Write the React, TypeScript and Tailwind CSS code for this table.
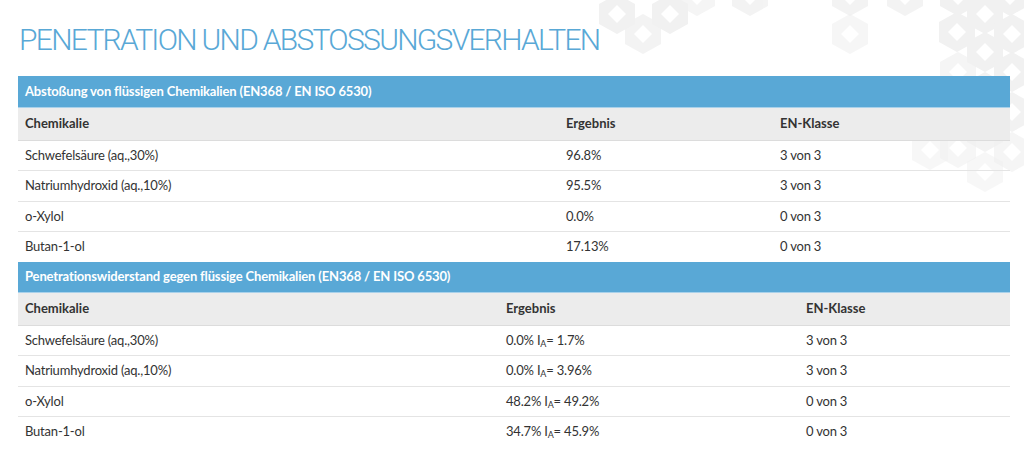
import React from "react";

type Row = { name: string; result: React.ReactNode; klasse: string };

const hexes: [number, number, number][] = [
  [617, 14, 1], [670, 14, 1], [643, 34, 0.8], [697, -4, 0.7], [750, -4, 0.8],
  [850, -4, 0.8], [850, 34, 0.6], [905, -4, 0.8], [958, -4, 1], [1010, -4, 1],
  [957, 32, 1], [985, 14, 1], [1012, 34, 1], [985, 52, 1], [1012, 72, 1],
  [985, 92, 0.9], [958, 72, 0.7], [1012, 112, 0.9], [985, 132, 0.8],
  [958, 148, 0.6], [930, 150, 0.5], [1012, 152, 0.7], [985, 172, 0.5],
];

function Pattern() {
  return (
    <svg
      className="absolute left-0 top-0 pointer-events-none"
      width={1024}
      height={200}
      viewBox="0 0 1024 200"
    >
      {hexes.map(([x, y, o], i) => (
        <g key={i} opacity={o}>
          <polygon
            points={`${x},${y - 20} ${x + 18},${y - 10} ${x + 18},${y + 10} ${x},${y + 20} ${x - 18},${y + 10} ${x - 18},${y - 10}`}
            fill="#f1f1f1"
          />
          <polygon
            points={`${x},${y - 9} ${x + 9},${y} ${x},${y + 9} ${x - 9},${y}`}
            fill="#ffffff"
          />
        </g>
      ))}
    </svg>
  );
}

function Ia({ a, b }: { a: string; b: string }) {
  return (
    <>
      {a} I<sub className="text-[9px] relative top-[2px]">A</sub>= {b}
    </>
  );
}

function DataTable({
  title,
  rows,
  cols,
  barH,
}: {
  title: string;
  rows: Row[];
  cols: [string, string, string];
  barH: string;
}) {
  return (
    <table className="w-full border-collapse text-[13px] tracking-[-0.2px] text-[#333]">
      <colgroup>
        <col className={cols[0]} />
        <col className={cols[1]} />
        <col className={cols[2]} />
      </colgroup>
      <thead>
        <tr className={`bg-[#59a8d6] ${barH}`}>
          <th
            colSpan={3}
            className="text-left text-white font-bold text-[13px] tracking-[-0.15px] px-[7px] border-b border-[#a9d1ea]"
          >
            {title}
          </th>
        </tr>
        <tr className="bg-[#ececec] h-[33px] border-b border-[#dcdcdc]">
          <th className="text-left font-bold px-[7px] tracking-normal">Chemikalie</th>
          <th className="text-left font-bold px-[7px] tracking-normal">Ergebnis</th>
          <th className="text-left font-bold px-[7px] tracking-normal">EN-Klasse</th>
        </tr>
      </thead>
      <tbody>
        {rows.map((r, i) => (
          <tr
            key={i}
            className={`h-[30.5px] ${i < rows.length - 1 ? "border-b border-[#e4e4e4]" : ""}`}
          >
            <td className="px-[7px]">{r.name}</td>
            <td className="px-[7px]">{r.result}</td>
            <td className="px-[7px]">{r.klasse}</td>
          </tr>
        ))}
      </tbody>
    </table>
  );
}

export default function App() {
  const repel: Row[] = [
    { name: "Schwefelsäure (aq.,30%)", result: "96.8%", klasse: "3 von 3" },
    { name: "Natriumhydroxid (aq.,10%)", result: "95.5%", klasse: "3 von 3" },
    { name: "o-Xylol", result: "0.0%", klasse: "0 von 3" },
    { name: "Butan-1-ol", result: "17.13%", klasse: "0 von 3" },
  ];
  const penetration: Row[] = [
    { name: "Schwefelsäure (aq.,30%)", result: <Ia a="0.0%" b="1.7%" />, klasse: "3 von 3" },
    { name: "Natriumhydroxid (aq.,10%)", result: <Ia a="0.0%" b="3.96%" />, klasse: "3 von 3" },
    { name: "o-Xylol", result: <Ia a="48.2%" b="49.2%" />, klasse: "0 von 3" },
    { name: "Butan-1-ol", result: <Ia a="34.7%" b="45.9%" />, klasse: "0 von 3" },
  ];

  return (
    <div className="relative w-[1024px] h-[460px] bg-white overflow-hidden font-['Lato',sans-serif]">
      <Pattern />
      <div className="relative pl-[18px] pr-[14px] pt-[22px]">
        <h1 className="font-['Roboto',sans-serif] text-[30px] font-light leading-[36px] tracking-[-1.7px] text-[#59a8d6] ml-[1px]">
          PENETRATION UND ABSTOSSUNGSVERHALTEN
        </h1>
        <div className="mt-[18px]">
          <DataTable
            title="Abstoßung von flüssigen Chemikalien (EN368 / EN ISO 6530)"
            rows={repel}
            cols={["w-[541px]", "w-[214px]", "w-[237px]"]}
            barH="h-[31px]"
          />
          <DataTable
            title="Penetrationswiderstand gegen flüssige Chemikalien (EN368 / EN ISO 6530)"
            rows={penetration}
            cols={["w-[481px]", "w-[300px]", "w-[211px]"]}
            barH="h-[30px]"
          />
        </div>
      </div>
    </div>
  );
}
